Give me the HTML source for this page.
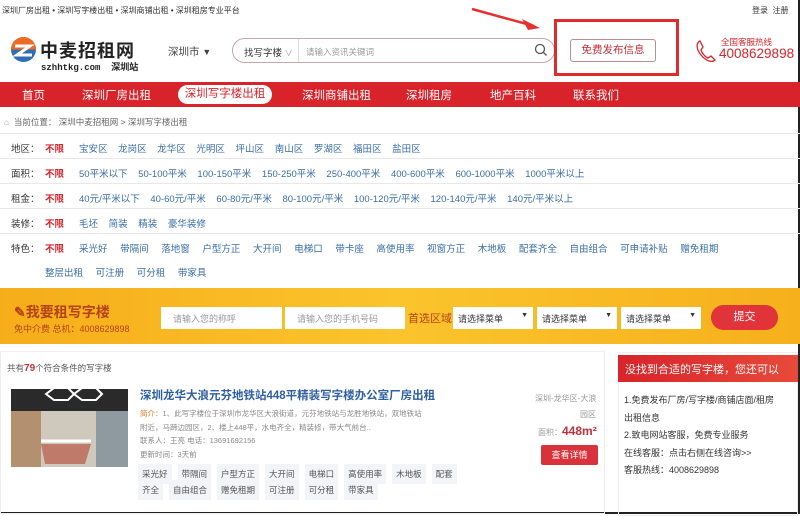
<!DOCTYPE html>
<html><head><meta charset="utf-8"><style>
*{margin:0;padding:0;box-sizing:border-box}
body{width:800px;height:514px;overflow:hidden;background:#fff;font-family:"Liberation Sans","Noto Sans CJK SC",sans-serif;position:relative;color:#333;border-right:2px solid #222;border-bottom:2px solid #222}
.a{position:absolute;white-space:nowrap}
.top{font-size:8px;color:#333}
.nav{left:0;top:82px;width:800px;height:25px;background:#d8232a}
.nav span{position:absolute;top:5px;font-size:11.5px;color:#fff}
.row{left:0;width:800px;height:25px;border-bottom:1px solid #e8e8e8;font-size:9.5px}
.row span{position:absolute;top:7px;color:#3a6ea5}
.row .l{color:#333}.row .r{color:#d8232a;font-weight:bold}
.tag{display:inline-block;background:#f2f4f7;color:#555;font-size:8.5px;padding:2px 4px;margin-right:6px}
</style></head><body>
<div class="a top" style="left:2px;top:5px">深圳厂房出租 • 深圳写字楼出租 • 深圳商铺出租 • 深圳租房专业平台</div>
<div class="a top" style="left:752px;top:5px">登录&nbsp;&nbsp;注册</div>
<svg class="a" style="left:10px;top:36px" width="27" height="27" viewBox="0 0 27 27"><circle cx="13.5" cy="13.5" r="12.5" fill="#2f6db5"/><path d="M1 13.5A12.5 12.5 0 0 1 26 13.5Z" fill="#ef6a22"/><path d="M5 10h15L7 19h15" stroke="#fff" stroke-width="3" fill="none"/></svg>
<div class="a" style="left:40px;top:37px;font-size:18px;font-weight:bold;color:#222;letter-spacing:1px">中麦招租网</div>
<div class="a" style="left:41px;top:60px;font-size:9px;font-weight:bold;color:#222;font-family:'Liberation Mono',monospace">szhhtkg.com&nbsp;&nbsp;深圳站</div>
<div class="a" style="left:168px;top:44px;font-size:10.5px;color:#444">深圳市 <span style="font-size:9px">▼</span></div>
<div class="a" style="left:232px;top:38px;width:323px;height:25px;border:1px solid #c8a5a8;border-radius:13px"></div>
<div class="a" style="left:244px;top:45px;font-size:9.5px;color:#333">找写字楼 <span style="font-size:8px;color:#999">∨</span></div>
<div class="a" style="left:298px;top:39px;width:1px;height:23px;background:#ddd"></div>
<div class="a" style="left:306px;top:46px;font-size:8.5px;color:#999">请输入资讯关键词</div>
<svg class="a" style="left:534px;top:43px" width="14" height="14"><circle cx="6" cy="6" r="4.5" stroke="#555" fill="none" stroke-width="1.3"/><path d="M9.5 9.5l3 3" stroke="#555" stroke-width="1.3"/></svg>
<div class="a" style="left:554px;top:19px;width:125px;height:57px;border:3px solid #e02b2b"></div>
<div class="a" style="left:570px;top:39px;width:86px;height:23px;border:1px solid #b99095;border-radius:3px;font-size:10.5px;color:#c0303a;text-align:center;line-height:21px">免费发布信息</div>
<svg class="a" style="left:72px;top:6px" width="480" height="24" viewBox="0 0 480 24"><path d="M400 3L462 20" stroke="#e53030" stroke-width="2.5"/><path d="M468 22L450 13 456 24Z" fill="#e53030"/></svg>
<svg class="a" style="left:694px;top:38px" width="24" height="26"><path d="M6 3c-4 2-4 8 1 14s11 8 14 5l-4-4-3 2c-3-1-6-5-7-8l2-3Z" stroke="#d8232a" stroke-width="1.3" fill="none"/></svg>
<div class="a" style="left:721px;top:36px;font-size:8.5px;color:#d8232a">全国客服热线</div>
<div class="a" style="left:719px;top:46px;font-size:13.5px;color:#d8232a">4008629898</div>
<div class="a nav">
<span style="left:22px">首页</span><span style="left:82px">深圳厂房出租</span>
<div class="a" style="left:178px;top:3px;width:94px;height:19px;background:#fff;border-radius:10px;color:#d8232a;font-size:11.5px;text-align:center;line-height:19px">深圳写字楼出租</div>
<span style="left:302px">深圳商铺出租</span><span style="left:406px">深圳租房</span><span style="left:490px">地产百科</span><span style="left:573px">联系我们</span></div>
<div class="a" style="left:4px;top:116px;font-size:8.5px;color:#666"><span style="color:#aaa">⌂</span>&nbsp; 当前位置： 深圳中麦招租网 &gt; 深圳写字楼出租</div>
<div class="a" style="left:0;top:133px;width:800px;border-top:1px solid #e8e8e8"></div>
<div class="a row" style="top:134px"><span class="l" style="left:11px">地区：</span><span class="r" style="left:45px">不限</span><span style="left:79px;word-spacing:8px">宝安区 龙岗区 龙华区 光明区 坪山区 南山区 罗湖区 福田区 盐田区</span></div>
<div class="a row" style="top:159px"><span class="l" style="left:11px">面积：</span><span class="r" style="left:45px">不限</span><span style="left:79px;word-spacing:8px">50平米以下 50-100平米 100-150平米 150-250平米 250-400平米 400-600平米 600-1000平米 1000平米以上</span></div>
<div class="a row" style="top:184px"><span class="l" style="left:11px">租金：</span><span class="r" style="left:45px">不限</span><span style="left:79px;word-spacing:8px">40元/平米以下 40-60元/平米 60-80元/平米 80-100元/平米 100-120元/平米 120-140元/平米 140元/平米以上</span></div>
<div class="a row" style="top:209px"><span class="l" style="left:11px">装修：</span><span class="r" style="left:45px">不限</span><span style="left:79px;word-spacing:8px">毛坯 简装 精装 豪华装修</span></div>
<div class="a row" style="top:234px;height:48px;border:none"><span class="l" style="left:11px">特色：</span><span class="r" style="left:45px">不限</span><span style="left:79px;word-spacing:10px">采光好 带隔间 落地窗 户型方正 大开间 电梯口 带卡座 高使用率 视窗方正 木地板 配套齐全 自由组合 可申请补贴 赠免租期</span><span style="left:45px;top:31px;word-spacing:10px">整层出租 可注册 可分租 带家具</span></div>
<div class="a" style="left:0;top:288px;width:800px;height:56px;background:linear-gradient(90deg,#f6ad1a,#fbc42c 50%,#f6b01c)"></div>
<div class="a" style="left:14px;top:302px;font-size:14px;font-weight:bold;color:#b4431a">✎我要租写字楼</div>
<div class="a" style="left:14px;top:322px;font-size:9px;color:#b4431a">免中介费 总机：4008629898</div>
<div class="a" style="left:161px;top:307px;width:121px;height:22px;background:#fff;font-size:9px;color:#999;padding:5px 12px">请输入您的称呼</div>
<div class="a" style="left:285px;top:307px;width:120px;height:22px;background:#fff;font-size:9px;color:#999;padding:5px 12px">请输入您的手机号码</div>
<div class="a" style="left:408px;top:310px;font-size:11px;color:#b4431a">首选区域</div>
<div class="a" style="left:453px;top:307px;width:80px;height:22px;background:#fff;font-size:9px;color:#333;padding:5px 5px">请选择菜单<span style="float:right;font-size:7px">▼</span></div>
<div class="a" style="left:537px;top:307px;width:80px;height:22px;background:#fff;font-size:9px;color:#333;padding:5px 5px">请选择菜单<span style="float:right;font-size:7px">▼</span></div>
<div class="a" style="left:621px;top:307px;width:80px;height:22px;background:#fff;font-size:9px;color:#333;padding:5px 5px">请选择菜单<span style="float:right;font-size:7px">▼</span></div>
<div class="a" style="left:711px;top:305px;width:67px;height:25px;background:#e0333a;border-radius:13px;color:#fff;font-size:11px;text-align:center;line-height:25px">提交</div>
<div class="a" style="left:0;top:351px;width:605px;height:163px;border:1px solid #eee"></div>
<div class="a" style="left:7px;top:362px;font-size:8.5px;color:#555">共有<b style="color:#c0303a;font-size:10px">79</b>个符合条件的写字楼</div>
<svg class="a" style="left:11px;top:389px" width="117" height="78"><rect width="117" height="78" fill="#cfc8bc"/><rect width="117" height="22" fill="#2a2a2a"/><rect x="0" y="22" width="30" height="56" fill="#b39070"/><rect x="85" y="22" width="32" height="56" fill="#8e9aa0"/><path d="M30 55h50l-6 20H34Z" fill="#c07a6a"/><path d="M30 52h50" stroke="#fff" stroke-width="3"/><path d="M35 5l8-6h14l6 6-6 6H43ZM63 5l8-6h14l6 6-6 6H71Z" stroke="#fff" stroke-width="2" fill="none"/></svg>
<div class="a" style="left:140px;top:387px;font-size:11.5px;font-weight:bold;color:#2e5fa1">深圳龙华大浪元芬地铁站448平精装写字楼办公室厂房出租</div>
<div class="a" style="left:140px;top:407px;font-size:7.5px;color:#888;line-height:13.6px"><span style="color:#e07b2a">简介：</span>1、此写字楼位于深圳市龙华区大浪街道，元芬地铁站与龙胜地铁站，双地铁站<br>附近，马蹄边园区，2、楼上448平，水电齐全，精装修，带大气前台..<br>联系人：王亮 电话：13691692156<br>更新时间：3天前</div>
<div class="a" style="left:138px;top:464px;line-height:16px"><span class="tag">采光好</span><span class="tag">带隔间</span><span class="tag">户型方正</span><span class="tag">大开间</span><span class="tag">电梯口</span><span class="tag">高使用率</span><span class="tag">木地板</span><span class="tag">配套</span></div>
<div class="a" style="left:138px;top:480px;line-height:16px"><span class="tag">齐全</span><span class="tag">自由组合</span><span class="tag">赠免租期</span><span class="tag">可注册</span><span class="tag">可分租</span><span class="tag">带家具</span></div>
<div class="a" style="left:535px;top:393px;font-size:8px;color:#999">深圳-龙华区-大浪</div>
<div class="a" style="left:580px;top:409px;font-size:8px;color:#999">园区</div>
<div class="a" style="left:538px;top:424px;font-size:8px;color:#999">面积：<b style="color:#c0303a;font-size:12px">448m²</b></div>
<div class="a" style="left:541px;top:445px;width:57px;height:20px;background:#d8323a;color:#fff;font-size:9px;text-align:center;line-height:20px;border-radius:2px">查看详情</div>
<div class="a" style="left:618px;top:352px;width:180px;height:164px;border:1px solid #eee"></div>
<div class="a" style="left:618px;top:355px;width:180px;height:27px;background:linear-gradient(90deg,#d8232a,#e84a3a);color:#fff;font-size:11px;padding:6px 7px">没找到合适的写字楼，您还可以</div>
<div class="a" style="left:624px;top:392px;font-size:9px;color:#333;line-height:17.5px">1.免费发布厂房/写字楼/商铺店面/租房<br>出租信息<br>2.致电网站客服，免费专业服务<br>在线客服：点击右侧在线咨询&gt;&gt;<br>客服热线：4008629898</div>
</body></html>
